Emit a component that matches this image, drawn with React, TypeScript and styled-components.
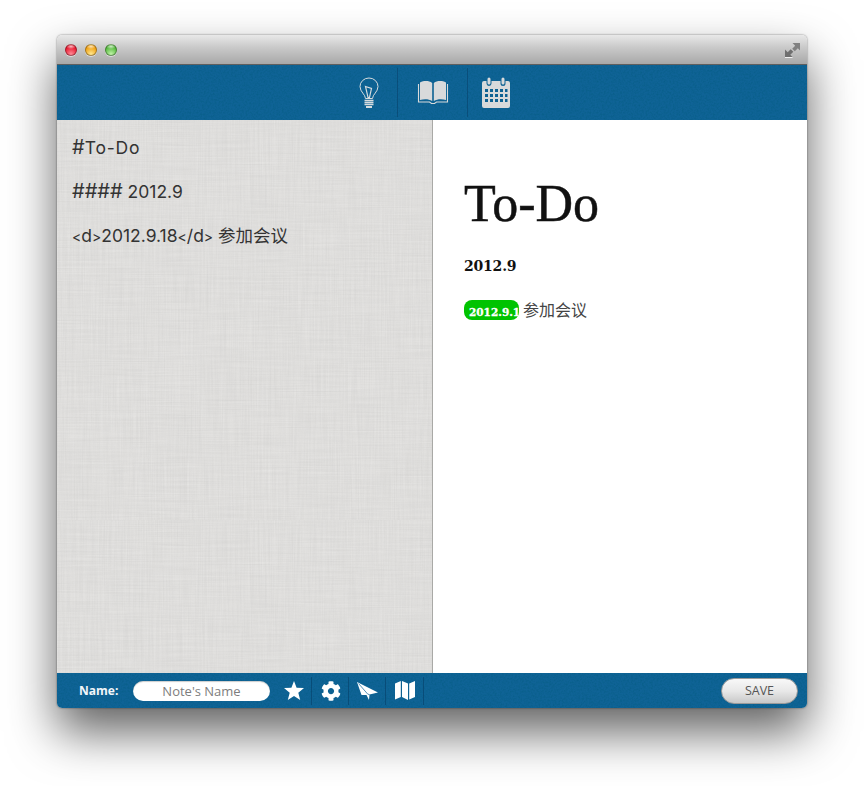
import styled, { createGlobalStyle } from "styled-components";
import { FaCog } from "react-icons/fa";

const GlobalStyle = createGlobalStyle`
  html, body {
    margin: 0;
    padding: 0;
    background: #fff;
  }
`;

// svg noise tiles for the blue leather and the grey linen
const svgTile = (body: string, size: number) =>
  `url("data:image/svg+xml,${encodeURIComponent(
    `<svg xmlns='http://www.w3.org/2000/svg' width='${size}' height='${size}'>${body}</svg>`
  )}")`;

const blueNoise = svgTile(
  `<filter id='n'><feTurbulence type='fractalNoise' baseFrequency='0.55' numOctaves='2' stitchTiles='stitch'/><feColorMatrix values='0 0 0 0 0  0 0 0 0 0.1  0 0 0 0 0.2  0.9 0 0 0 -0.33'/></filter><rect width='100%' height='100%' filter='url(#n)'/>`,
  200
);

const linenLines = (id: string, freq: string, seed: number, tone: number) =>
  `<filter id='${id}'><feTurbulence type='fractalNoise' baseFrequency='${freq}' numOctaves='2' seed='${seed}' stitchTiles='stitch'/><feColorMatrix values='0 0 0 0 ${tone}  0 0 0 0 ${tone}  0 0 0 0 ${tone}  0.22 0 0 0 -0.07'/></filter><rect width='100%' height='100%' filter='url(#${id})'/>`;

const linen = svgTile(
  linenLines("a", "0.8 0.012", 3, 1) +
    linenLines("b", "0.012 0.8", 7, 1) +
    linenLines("c", "0.7 0.02", 11, 0.45) +
    linenLines("d", "0.02 0.7", 13, 0.45),
  400
);

const Page = styled.div`
  width: 864px;
  height: 786px;
  padding: 35px 57px 0;
  box-sizing: border-box;
  overflow: hidden;
`;

const Window = styled.div`
  width: 750px;
  height: 673px;
  display: flex;
  flex-direction: column;
  border-radius: 5px;
  overflow: hidden;
  box-shadow: 0 24px 48px rgba(0, 0, 0, 0.62), 0 0 2px rgba(0, 0, 0, 0.55);
`;

const TitleBar = styled.div`
  height: 30px;
  flex-shrink: 0;
  box-sizing: border-box;
  display: flex;
  align-items: center;
  justify-content: space-between;
  padding: 0 7px 0 8px;
  background: linear-gradient(#e8e8e8, #c8c8c8 45%, #a8a8a8);
  border-bottom: 1px solid #5f5f5f;
`;

const Lights = styled.div`
  display: flex;
  gap: 8px;
`;

const Light = styled.span<{ $color: string; $glow: string }>`
  width: 12px;
  height: 12px;
  border-radius: 50%;
  box-sizing: border-box;
  border: 1px solid rgba(0, 0, 0, 0.32);
  background:
    radial-gradient(ellipse 5px 2.5px at 50% 15%, rgba(255, 255, 255, 0.7), transparent),
    radial-gradient(circle at 50% 90%, ${(p) => p.$glow}, ${(p) => p.$color} 70%);
  box-shadow: 0 1px 0 rgba(255, 255, 255, 0.5);
`;

const ToolBar = styled.div`
  height: 55px;
  flex-shrink: 0;
  display: flex;
  justify-content: center;
  background: ${blueNoise}, #0f6396;
`;

const ToolCell = styled.div<{ $width: number; $divider?: boolean }>`
  width: ${(p) => p.$width}px;
  display: flex;
  align-items: center;
  justify-content: center;
  border-left: ${(p) => (p.$divider ? "1px solid rgba(6, 60, 100, 0.5)" : "1px solid transparent")};
  margin: 3px 0;
  box-sizing: border-box;
`;

const Panes = styled.div`
  flex: 1;
  display: flex;
  min-height: 0;
`;

const Editor = styled.div`
  width: 376px;
  box-sizing: border-box;
  padding: 17px 15px;
  border-right: 1px solid #a9a9a6;
  background: ${linen}, #dfdedc;
  font-family: "Inter", "Noto Sans CJK SC", sans-serif;
  font-size: 17.5px;
  color: #333;
`;

const EditorLine = styled.div`
  height: 22px;
  line-height: 22px;
  margin-bottom: 22px;
  white-space: nowrap;
`;

const Hash = styled.span`
  font-size: 20px;
  line-height: 20px;
`;

const Word = styled.span`
  letter-spacing: 0.8px;
`;

const Bracket = styled.span`
  font-size: 14px;
`;

const Preview = styled.div`
  flex: 1;
  background: #fff;
  box-sizing: border-box;
  padding: 55px 31px 0;
`;

const Title = styled.h1`
  margin: 0;
  height: 58px;
  line-height: 58px;
  font-family: "Liberation Serif", serif;
  font-weight: 400;
  font-size: 52px;
  color: #111;
  -webkit-text-stroke: 0.5px #111;
`;

const SubTitle = styled.h4`
  margin: 22px 0 0;
  height: 22px;
  line-height: 22px;
  font-family: "DejaVu Serif", serif;
  font-weight: 700;
  font-size: 14px;
  letter-spacing: -0.2px;
  color: #111;
`;

const Entry = styled.div`
  margin-top: 23px;
  display: flex;
  align-items: center;
  gap: 4px;
  font-family: "Noto Sans CJK SC", sans-serif;
  font-size: 16px;
  line-height: 18px;
  color: #444;
  height: 20px;
`;

const DateBadge = styled.span`
  width: 55px;
  height: 20px;
  flex-shrink: 0;
  box-sizing: border-box;
  padding: 4px 0 0 5px;
  border-radius: 8px;
  background: #00c300;
  overflow: hidden;
  white-space: nowrap;
  font-family: "DejaVu Serif", serif;
  font-weight: 700;
  font-size: 10.5px;
  line-height: 17px;
  color: #fff;
  -webkit-text-stroke: 0.3px #fff;
`;

const EntryText = styled.span`
  margin-bottom: 2px;
`;

const Footer = styled.div`
  height: 35px;
  flex-shrink: 0;
  display: flex;
  align-items: center;
  padding: 0 9px 0 22px;
  background: ${blueNoise}, #0f6396;
  font-family: "Open Sans", "Liberation Sans", sans-serif;
`;

const NameLabel = styled.label`
  font-size: 12px;
  font-weight: 700;
  color: #f2f6f9;
  width: 54px;
`;

const NameField = styled.div`
  width: 137px;
  height: 20px;
  border-radius: 10px;
  background: #fff;
  text-align: center;
  font-size: 13px;
  font-weight: 500;
  line-height: 20px;
  color: #7d7d7d;
  margin-right: 5px;
  box-shadow: inset 0 1px 1px rgba(0, 0, 0, 0.2);
`;

const FooterIcon = styled.div<{ $width?: number }>`
  width: ${(p) => p.$width ?? 37}px;
  height: 28px;
  box-sizing: border-box;
  padding-left: ${(p) => (p.$width ? 0 : 1)}px;
  display: flex;
  align-items: center;
  justify-content: center;
  color: #fff;
  border-right: 1px solid rgba(6, 60, 100, 0.55);
`;

const SaveButton = styled.button`
  margin-left: auto;
  width: 77px;
  height: 26px;
  padding: 0;
  border-radius: 13px;
  border: 1px solid #9a9a9a;
  background: linear-gradient(#f8f8f8, #e8e8e8 50%, #c8c8c8);
  font-family: "Open Sans", sans-serif;
  font-size: 12.5px;
  color: #555;
`;

const LightBulb = () => (
  <svg width="20" height="32" viewBox="0 0 20 32" fill="none" stroke="#d6dcdf" strokeWidth="1">
    <path d="M6.500 21.500c0-4-5.500-6.500-5.500-12a9 8.500 0 0 1 18 0c0 5.500-5.500 8-5.500 12z" />
    <path d="M6.500 9.500l6 2-2 9h-1.500z" strokeWidth="1.200" />
    <path d="M5.500 23.500h9M5.500 25.500h9M5.500 27.500h9" strokeWidth="1.300" />
    <path d="M7 30h6" strokeWidth="2" />
  </svg>
);

const OpenBook = () => (
  <svg width="32" height="26" viewBox="0 0 32 26">
    <path
      d="M3 2.500C7 .5 12 .500 15.200 3v18c-3.500-2-8-2-12.200-1z M29 2.500C25 .5 20 .500 16.800 3v18c3.500-2 8-2 12.200-1z"
      fill="#d8dadb"
    />
    <path d="M1.500 4v18h11l2 1.500h3l2-1.500h11V4" fill="none" stroke="#d8dadb" strokeWidth="1.100" />
  </svg>
);

const CalendarIcon = () => (
  <svg width="28" height="31" viewBox="0 0 28 31">
    <path
      fillRule="evenodd"
      fill="#d8dadb"
      d="M2 4h2.500v2.500a2.500 2.500 0 0 0 5 0V4h9v2.500a2.500 2.500 0 0 0 5 0V4H26a2 2 0 0 1 2 2v23a2 2 0 0 1-2 2H2a2 2 0 0 1-2-2V6a2 2 0 0 1 2-2z M3 12v3h3v-3z M8 12v3h3v-3z M13 12v3h3v-3z M18 12v3h3v-3z M23 12v3h2.500v-3z M3 17v3h3v-3z M8 17v3h3v-3z M13 17v3h3v-3z M18 17v3h3v-3z M23 17v3h2.500v-3z M3 22v3h3v-3z M8 22v3h3v-3z M13 22v3h3v-3z M18 22v3h3v-3z M23 22v3h2.500v-3z"
    />
    <rect x="5.500" y="0.500" width="3" height="7" rx="1.500" fill="#d8dadb" />
    <rect x="19.500" y="0.500" width="3" height="7" rx="1.500" fill="#d8dadb" />
  </svg>
);

const StarIcon = () => (
  <svg width="20" height="19" viewBox="0 0 20 19" fill="#fff">
    <path d="M10 0l2.600 6.700 7.400.4-5.700 4.700 1.900 7.200L10 15l-6.200 4 1.900-7.200L0 7.100l7.400-.4z" />
  </svg>
);

const PaperPlane = () => (
  <svg width="21" height="18" viewBox="0 0 21 18">
    <path d="M0 0L21 10.500 12.500 12.500 12 18 9.500 13 4.500 13z" fill="#fff" />
    <path d="M1.500 1.500L10.800 12.200 12.500 12.500" fill="none" stroke="#0f6396" strokeWidth="0.7" />
  </svg>
);

const MapIcon = () => (
  <svg width="20" height="19" viewBox="0 0 20 19" fill="#fff">
    <path d="M0 2.500L5.800 0v16L0 18.500z" />
    <path d="M7 0l6 2.500V19l-6-3z" />
    <path d="M14.200 2.500L20 0v16l-5.800 2.500z" />
  </svg>
);

const ExpandIcon = () => (
  <svg width="15" height="16" viewBox="0 0 15 16">
    <path d="M7.500 1H15v7.500l-2.200-2.200-3 3-2.600-2.600 3-3z" fill="#808080" />
    <path d="M0 7.500V15h7.500l-2.200-2.200 3-3-2.600-2.600-3 3z" fill="#6f6f6f" />
    <path d="M0 15h7.500v1H0z" fill="#f0f0f0" />
  </svg>
);

export default function App() {
  return (
    <Page>
      <GlobalStyle />
      <Window>
        <TitleBar>
          <Lights>
            <Light $color="#e8182e" $glow="#ff8a96" />
            <Light $color="#f0a010" $glow="#ffe890" />
            <Light $color="#54b83c" $glow="#c0f4a8" />
          </Lights>
          <ExpandIcon />
        </TitleBar>
        <ToolBar>
          <ToolCell $width={57}>
            <LightBulb />
          </ToolCell>
          <ToolCell $width={70} $divider>
            <OpenBook />
          </ToolCell>
          <ToolCell $width={57} $divider>
            <CalendarIcon />
          </ToolCell>
        </ToolBar>
        <Panes>
          <Editor>
            <EditorLine>
              <Hash>#</Hash>
              <Word>To-Do</Word>
            </EditorLine>
            <EditorLine>
              <Hash>####</Hash> 2012.9
            </EditorLine>
            <EditorLine>
              <Bracket>&lt;</Bracket>d<Bracket>&gt;</Bracket>2012.9.18<Bracket>&lt;</Bracket>/d<Bracket>&gt;</Bracket> 参加会议
            </EditorLine>
          </Editor>
          <Preview>
            <Title>To-Do</Title>
            <SubTitle>2012.9</SubTitle>
            <Entry>
              <DateBadge>2012.9.18</DateBadge>
              <EntryText>参加会议</EntryText>
            </Entry>
          </Preview>
        </Panes>
        <Footer>
          <NameLabel>Name:</NameLabel>
          <NameField>Note's Name</NameField>
          <FooterIcon>
            <StarIcon />
          </FooterIcon>
          <FooterIcon>
            <FaCog size={20} />
          </FooterIcon>
          <FooterIcon>
            <PaperPlane />
          </FooterIcon>
          <FooterIcon $width={38}>
            <MapIcon />
          </FooterIcon>
          <SaveButton>SAVE</SaveButton>
        </Footer>
      </Window>
    </Page>
  );
}
